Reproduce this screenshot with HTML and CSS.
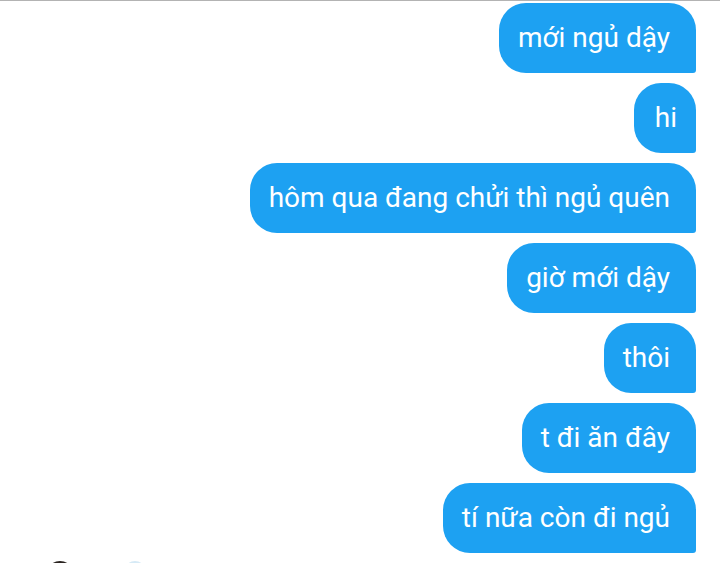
FILE: index.html
```html
<!DOCTYPE html>
<html lang="vi">
<head>
<meta charset="utf-8">
<link rel="stylesheet" href="styles.css">
</head>
<body>
<div class="chat">
  <div class="bubble">mới ngủ dậy</div>
  <div class="bubble short">hi</div>
  <div class="bubble">hôm qua đang chửi thì ngủ quên</div>
  <div class="bubble">giờ mới dậy</div>
  <div class="bubble">thôi</div>
  <div class="bubble">t đi ăn đây</div>
  <div class="bubble">tí nữa còn đi ngủ</div>
</div>
<div class="peek">
  <span class="dot dark"></span>
  <span class="dot light"></span>
</div>
</body>
</html>
```
FILE: styles.css
```css
html, body {
  margin: 0;
  padding: 0;
  background: #ffffff;
  overflow: hidden;
}
body {
  width: 720px;
  height: 563px;
  border-top: 1px solid #b3b3b3;
  box-sizing: border-box;
  position: relative;
  font-family: Roboto, "Noto Sans", sans-serif;
}
.chat {
  display: flex;
  flex-direction: column;
  align-items: flex-end;
  gap: 10px;
  padding: 2px 24px 0 0;
}
.bubble {
  background: #1da1f2;
  color: #ffffff;
  font-size: 28px;
  line-height: 30px;
  padding: 20px 26px 20px 19px;
  border-radius: 27px 27px 3px 27px;
  white-space: nowrap;
}
.bubble.short {
  padding-left: 21px;
  padding-right: 19px;
}
.peek {
  position: absolute;
  left: 0;
  top: 559px;
  width: 200px;
  height: 4px;
  overflow: hidden;
}
.dot {
  position: absolute;
  top: 1px;
  border-radius: 50%;
}
.dot.dark {
  left: 46px;
  width: 28px;
  height: 28px;
  background: #2a2420;
}
.dot.light {
  left: 124px;
  width: 22px;
  height: 22px;
  background: #d6eaf6;
}
```
